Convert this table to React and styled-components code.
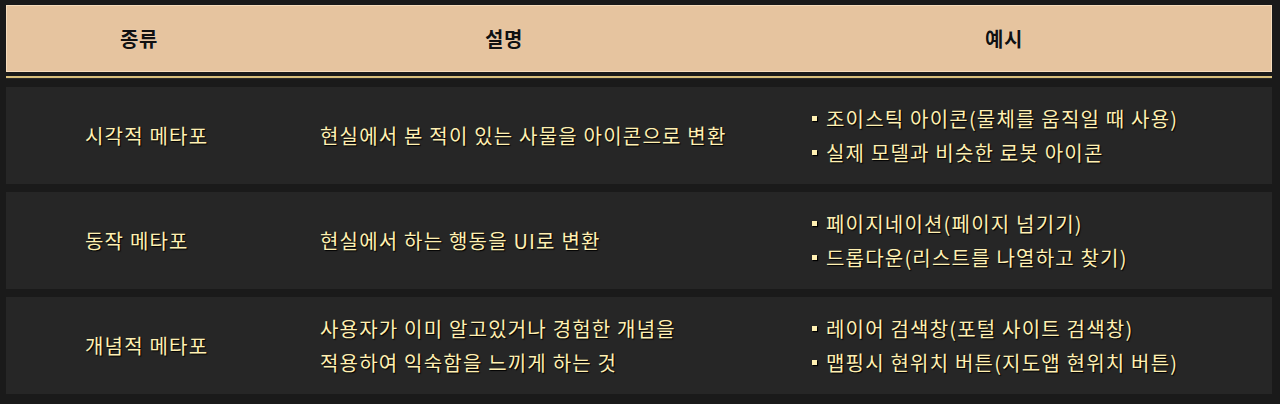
import React from 'react';
import styled, { createGlobalStyle } from 'styled-components';

const GlobalStyle = createGlobalStyle`
  html, body {
    margin: 0;
    padding: 0;
    background: #1a1a1a;
  }
  body {
    font-family: 'Noto Sans CJK KR', 'Noto Sans', sans-serif;
  }
`;

const rows = [
  {
    kind: '시각적 메타포',
    desc: ['현실에서 본 적이 있는 사물을 아이콘으로 변환'],
    examples: ['조이스틱 아이콘(물체를 움직일 때 사용)', '실제 모델과 비슷한 로봇 아이콘'],
  },
  {
    kind: '동작 메타포',
    desc: ['현실에서 하는 행동을 UI로 변환'],
    examples: ['페이지네이션(페이지 넘기기)', '드롭다운(리스트를 나열하고 찾기)'],
  },
  {
    kind: '개념적 메타포',
    desc: ['사용자가 이미 알고있거나 경험한 개념을', '적용하여 익숙함을 느끼게 하는 것'],
    examples: ['레이어 검색창(포털 사이트 검색창)', '맵핑시 현위치 버튼(지도앱 현위치 버튼)'],
  },
];

const App = () => (
  <>
    <GlobalStyle />
    <Page>
      <HeaderRow>
        <HeadCell>종류</HeadCell>
        <HeadCell>설명</HeadCell>
        <HeadCell>예시</HeadCell>
      </HeaderRow>
      <GoldRule />
      <Body>
        {rows.map((row) => (
          <Row key={row.kind}>
            <KindCell>{row.kind}</KindCell>
            <DescCell>
              {row.desc.map((line) => (
                <Line key={line}>{line}</Line>
              ))}
            </DescCell>
            <ExampleCell>
              {row.examples.map((ex) => (
                <Bullet key={ex}>{ex}</Bullet>
              ))}
            </ExampleCell>
          </Row>
        ))}
      </Body>
    </Page>
  </>
);

const columns = '264px 466px 1fr';

const Page = styled.div`
  width: 1280px;
  height: 404px;
  box-sizing: border-box;
  padding: 5px 8px 0 6px;
  background: #1a1a1a;
  display: flex;
  flex-direction: column;
`;

const HeaderRow = styled.div`
  display: grid;
  grid-template-columns: ${columns};
  height: 67px;
  box-sizing: border-box;
  background: #e6c49f;
  border: 1px solid #f6dcbc;
`;

const HeadCell = styled.div`
  display: flex;
  align-items: center;
  justify-content: center;
  color: #111;
  font-size: 20px;
  font-weight: 700;
  letter-spacing: 0.5px;
  text-shadow: 0 0 1px #f8e6cf;
`;

const GoldRule = styled.div`
  height: 2px;
  margin-top: 4px;
  background: #d8bf7c;
  border-bottom: 1px solid #2a2a2a;
`;

const Body = styled.div`
  display: flex;
  flex-direction: column;
  gap: 8px;
  margin-top: 8px;
`;

const Row = styled.div`
  display: grid;
  grid-template-columns: ${columns};
  height: 97px;
  background: #262626;
  color: #fff0b2;
  font-size: 20px;
  letter-spacing: 1.2px;
  text-shadow: 1px 1px 1px #000;
`;

const KindCell = styled.div`
  display: flex;
  align-items: center;
  padding-left: 79px;
`;

const DescCell = styled.div`
  display: flex;
  flex-direction: column;
  justify-content: center;
  padding-left: 50px;
`;

const Line = styled.div`
  line-height: 34px;
`;

const ExampleCell = styled.ul`
  margin: 0;
  list-style: none;
  display: flex;
  flex-direction: column;
  justify-content: center;
  padding-left: 76px;
`;

const Bullet = styled.li`
  display: flex;
  align-items: center;
  line-height: 34px;

  &::before {
    content: '';
    width: 5px;
    height: 5px;
    margin-right: 9px;
    background: #fff0b2;
    box-shadow: 1px 1px 1px #000;
  }
`;

export default App;
